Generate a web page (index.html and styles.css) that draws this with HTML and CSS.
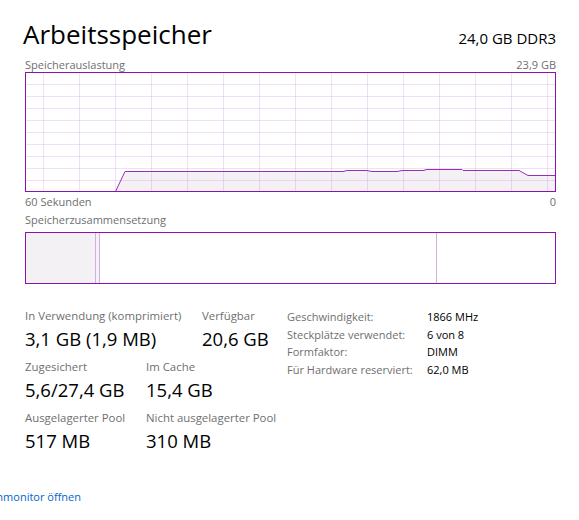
FILE: index.html
```html
<!DOCTYPE html>
<html lang="de">
<head>
<meta charset="utf-8">
<title>Arbeitsspeicher</title>
<link rel="stylesheet" href="styles.css">
</head>
<body>
<div class="page">
  <header class="head">
    <h1 class="title">Arbeitsspeicher</h1>
    <div class="spec">24,0 GB DDR3</div>
  </header>

  <div class="axis axis-top"><span>Speicherauslastung</span><span>23,9 GB</span></div>

  <svg class="graph" width="531" height="120" viewBox="0 0 531 120" xmlns="http://www.w3.org/2000/svg">
    <polygon class="area" points="0,119 90.5,119 100,99.5 318,99.5 322,98.5 342,98.5 347,99.5 372,99.5 377,98.5 398,98.5 402,97.5 437,97.5 438,98.5 494,98.5 503,103.5 530,103.5 530,119"/>
    <g class="grid">
      <line x1="0" y1="12.5" x2="530" y2="12.5"/>
      <line x1="0" y1="24.5" x2="530" y2="24.5"/>
      <line x1="0" y1="36.5" x2="530" y2="36.5"/>
      <line x1="0" y1="48.5" x2="530" y2="48.5"/>
      <line x1="0" y1="60.5" x2="530" y2="60.5"/>
      <line x1="0" y1="72.5" x2="530" y2="72.5"/>
      <line x1="0" y1="84.5" x2="530" y2="84.5"/>
      <line x1="0" y1="96.5" x2="530" y2="96.5"/>
      <line x1="0" y1="108.5" x2="530" y2="108.5"/>
      <line x1="18.5" y1="0" x2="18.5" y2="119"/>
      <line x1="54.5" y1="0" x2="54.5" y2="119"/>
      <line x1="90.5" y1="0" x2="90.5" y2="119"/>
      <line x1="126.5" y1="0" x2="126.5" y2="119"/>
      <line x1="162.5" y1="0" x2="162.5" y2="119"/>
      <line x1="198.5" y1="0" x2="198.5" y2="119"/>
      <line x1="234.5" y1="0" x2="234.5" y2="119"/>
      <line x1="270.5" y1="0" x2="270.5" y2="119"/>
      <line x1="306.5" y1="0" x2="306.5" y2="119"/>
      <line x1="342.5" y1="0" x2="342.5" y2="119"/>
      <line x1="378.5" y1="0" x2="378.5" y2="119"/>
      <line x1="414.5" y1="0" x2="414.5" y2="119"/>
      <line x1="450.5" y1="0" x2="450.5" y2="119"/>
      <line x1="486.5" y1="0" x2="486.5" y2="119"/>
      <line x1="522.5" y1="0" x2="522.5" y2="119"/>
    </g>
    <polyline class="trace" points="0,119.5 90.5,119.5 100,99.5 318,99.5 322,98.5 342,98.5 347,99.5 372,99.5 377,98.5 398,98.5 402,97.5 437,97.5 438,98.5 494,98.5 503,103.5 530,103.5"/>
    <rect class="frame" x="0.5" y="0.5" width="530" height="119"/>
  </svg>

  <div class="axis axis-bottom"><span>60 Sekunden</span><span>0</span></div>

  <div class="caption">Speicherzusammensetzung</div>
  <div class="comp">
    <div class="seg seg-used"></div>
    <div class="seg seg-modified"></div>
    <div class="seg seg-standby"></div>
    <div class="seg seg-free"></div>
  </div>

  <section class="stats">
    <div class="stats-left">
      <div class="pair-top">
        <div class="stat stat-wide">
          <div class="label">In Verwendung (komprimiert)</div>
          <div class="value">3,1 GB (1,9 MB)</div>
        </div>
        <div class="stat">
          <div class="label">Verfügbar</div>
          <div class="value">20,6 GB</div>
        </div>
      </div>
      <div class="pair-grid">
        <div class="stat">
          <div class="label">Zugesichert</div>
          <div class="value">5,6/27,4 GB</div>
        </div>
        <div class="stat">
          <div class="label">Im Cache</div>
          <div class="value">15,4 GB</div>
        </div>
        <div class="stat">
          <div class="label">Ausgelagerter Pool</div>
          <div class="value">517 MB</div>
        </div>
        <div class="stat">
          <div class="label">Nicht ausgelagerter Pool</div>
          <div class="value">310 MB</div>
        </div>
      </div>
    </div>
    <dl class="info">
      <dt>Geschwindigkeit:</dt><dd>1866 MHz</dd>
      <dt>Steckplätze verwendet:</dt><dd>6 von 8</dd>
      <dt>Formfaktor:</dt><dd>DIMM</dd>
      <dt>Für Hardware reserviert:</dt><dd>62,0 MB</dd>
    </dl>
  </section>
</div>
<footer class="foot">
  <a class="link" href="#">Ressourcenmonitor öffnen</a>
</footer>
</body>
</html>
```

FILE: styles.css
```css
html, body {
  margin: 0;
  padding: 0;
  background: #ffffff;
}

body {
  font-family: "Open Sans", "Noto Sans", sans-serif;
  color: #000;
  width: 579px;
  height: 520px;
  overflow: hidden;
}

.page {
  width: 531px;
  padding: 18px 0 0 25px;
}

.head {
  display: flex;
  justify-content: space-between;
  align-items: baseline;
  height: 32px;
}

.title {
  margin: 0 0 0 -2px;
  font-size: 26px;
  font-weight: 400;
  line-height: 32px;
}

.spec {
  font-size: 15px;
  line-height: 32px;
}

.axis {
  display: flex;
  justify-content: space-between;
  font-size: 11px;
  line-height: 14px;
  color: #6f6f6f;
}

.axis-top {
  margin-top: 8px;
  height: 14px;
}

.graph {
  display: block;
}

.area {
  fill: #f4f1f5;
}

.grid line {
  stroke: rgba(139, 18, 174, 0.13);
  stroke-width: 1;
}

.trace {
  fill: none;
  stroke: #9a2cb8;
  stroke-width: 1;
}

.frame {
  fill: none;
  stroke: #8b12ae;
  stroke-width: 1;
}

.axis-bottom {
  margin-top: 3px;
}

.caption {
  margin-top: 4px;
  font-size: 11px;
  line-height: 14px;
  color: #6f6f6f;
}

.comp {
  margin-top: 5px;
  width: 529px;
  height: 50px;
  border: 1px solid #8b12ae;
  display: flex;
}

.seg {
  height: 100%;
}

.seg-used {
  width: 69px;
  background: #f4f1f5;
  border-right: 1px solid #d1b0dd;
}

.seg-modified {
  width: 3px;
  background: #f6f0f8;
  border-right: 1px solid #d1b0dd;
}

.seg-standby {
  width: 336px;
  border-right: 1px solid #d1b0dd;
}

.seg-free {
  flex: 1;
}

.stats {
  margin-top: 25px;
  display: flex;
  align-items: flex-start;
}

.stats-left {
  width: 262px;
  display: flex;
  flex-direction: column;
  gap: 9px;
}

.pair-top {
  display: flex;
}

.stat-wide {
  width: 177px;
}

.pair-grid {
  display: grid;
  grid-template-columns: 121px auto;
  row-gap: 9px;
}

.label {
  font-size: 11.4px;
  line-height: 14px;
  color: #6f6f6f;
  white-space: nowrap;
}

.value {
  margin-top: 4px;
  font-size: 18.5px;
  line-height: 24px;
  white-space: nowrap;
}

.info {
  margin: -1px 0 0 0;
  display: grid;
  grid-template-columns: 140px auto;
  align-content: start;
  font-size: 11px;
  line-height: 17.6px;
}

.info dt {
  color: #6f6f6f;
  white-space: nowrap;
}

.info dd {
  margin: 0;
  color: #000;
}

.foot {
  margin-top: 37px;
  width: 81px;
  overflow: hidden;
  display: flex;
  justify-content: flex-end;
}

.link {
  font-size: 11px;
  line-height: 14px;
  color: #0066cc;
  text-decoration: none;
  white-space: nowrap;
  flex-shrink: 0;
}
```
